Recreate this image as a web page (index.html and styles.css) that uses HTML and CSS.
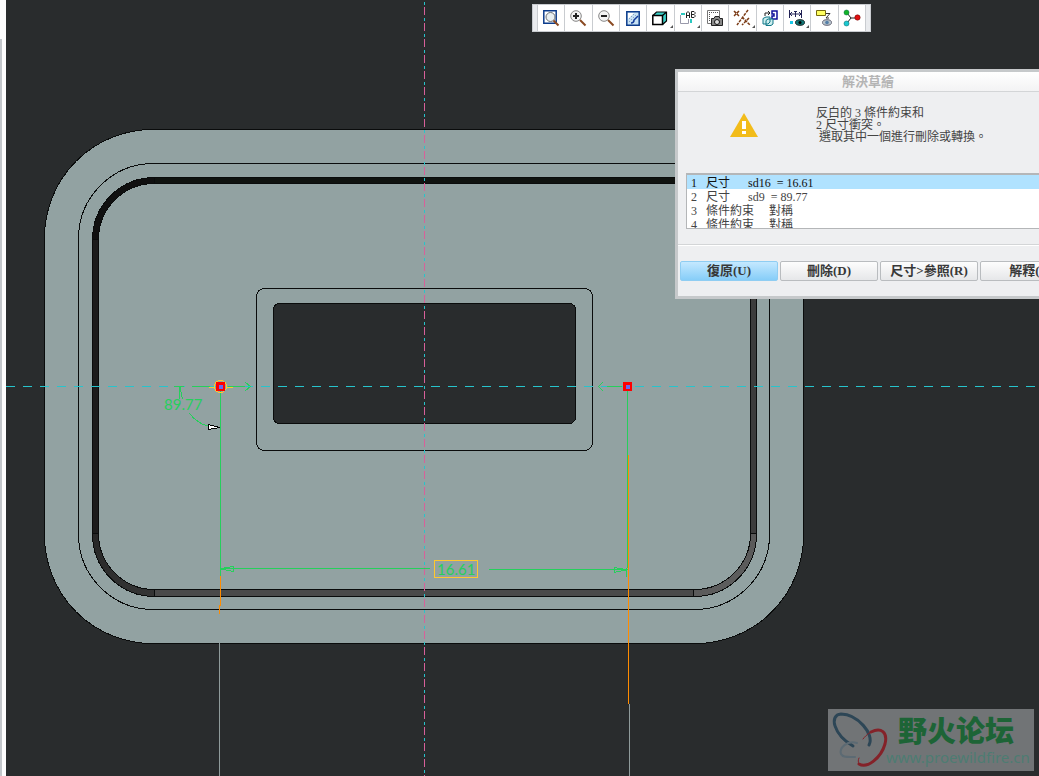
FILE: index.html
```
<!DOCTYPE html>
<html lang="zh-Hant">
<head>
<meta charset="utf-8">
<title>解決草繪</title>
<link rel="stylesheet" href="styles.css">
</head>
<body>
<aside class="edge"></aside>
<main class="viewport">
<svg class="model" shape-rendering="crispEdges">
<defs>
<linearGradient id="groove" x1="0" y1="0" x2="1" y2="1">
<stop offset="0" stop-color="#101010"/>
<stop offset=".25" stop-color="#101010"/>
<stop offset=".5" stop-color="#303030"/>
<stop offset="1" stop-color="#606060"/>
</linearGradient>
</defs>
<!-- plate -->
<g class="outline">
<rect class="plate" x="38.5" y="129.5" width="759" height="514" rx="108"/>
<rect x="72.5" y="163.5" width="691" height="446" rx="75"/>
<rect class="groove" x="86.5" y="177.5" width="664" height="419" rx="62"/>
<path fill="#101310" d="M148 177.500H689V183.500H148z"/>
<path fill="#1c1c1c" d="M86.500 239V533H92.500V239z"/>
<path fill="#4a4a4a" d="M148.500 589.500H687.500V596.500H148.500z"/>
<path fill="#3c3c3c" d="M744.500 239V533H750.500V239z"/>
<rect class="plate" x="92.500" y="183.500" width="652" height="406" rx="56"/>
<rect x="250.500" y="288.500" width="336" height="162" rx="8"/>
<rect class="hole" x="267.500" y="303.500" width="302" height="120" rx="6"/>
</g>
<!-- datum axes -->
<path class="axis-pink" d="M418.500 0V1200"/>
<path class="axis-cyan-v" d="M418.500 0V1200"/>
<line class="axis-cyan" x1="0" y1="386.500" x2="100%" y2="386.500"/>
<!-- angle dimension -->
<g class="dim">
<path d="M168 386.500H178M186 386.500H204M222 386.500H239M239 382L244.500 386.500L239 391"/>
<path d="M173.500 387V399M174 387L176.500 399"/>
<path d="M183 413Q192 424 202 426"/>
<path d="M214.500 390V576"/>
<path d="M601 386.500H616M597 382L592.500 386.500L597 391"/>
<path d="M621.500 391V568"/>
</g>
<path class="arrow" d="M202.500 424.500L214 427.500L202.500 429.500z"/>
<!-- width dimension -->
<g class="dim">
<path d="M215 568.500H424M215 568.500L227 566.500V571.500L215 569"/>
<path d="M483 569.500H622M620 569.500L608 567.500V572.500L620 570M620.500 568V577"/>
</g>
<path class="hot" d="M214.500 576V605.500H213.500V614"/>
<path class="hot" d="M622.500 455V704"/>
<path class="thin" d="M213.500 643V1200M623.500 704V1200"/>
<text class="dim-text" x="158" y="410">89.77</text>
<rect class="dim-box" x="428.500" y="560.500" width="43" height="17"/>
<text class="dim-text" x="431" y="575">16.61</text>
<!-- sketch points -->
<circle class="halo" cx="214.500" cy="386.500" r="6"/>
<path class="halo" d="M203 387.500H209M221 387.500H227"/>
<rect x="210" y="382" width="9" height="9" fill="#f00"/>
<rect x="213" y="385" width="4" height="4" fill="#6a6af0"/>
<rect x="617" y="382" width="9" height="9" fill="#f00"/>
<rect x="620" y="385" width="4" height="4" fill="#6a6af0"/>
</svg>

<nav class="toolbar">
<button type="button" aria-label="重新調整"><svg viewBox="0 0 16 16"><path fill="#fff" stroke="#0c3c8c" stroke-width="1.500" d="M.8 .8H13.200V13.200H.8z"/><circle cx="7.500" cy="7" r="4.500" fill="#e9f0f2" stroke="#6c7074"/><path stroke="#8a4a22" stroke-width="2" d="M10.500 10.500L15.500 15.500"/></svg></button>
<button type="button" aria-label="放大"><svg viewBox="0 0 16 16"><circle cx="6" cy="6" r="5.300" fill="#f4f4f4" stroke="#888"/><path stroke="#222" stroke-width="2" d="M3 6H9M6 3V9"/><path stroke="#8a4a22" stroke-width="2" d="M10 10L15.500 15.500"/></svg></button>
<button type="button" aria-label="縮小"><svg viewBox="0 0 16 16"><circle cx="6" cy="6" r="5.300" fill="#f4f4f4" stroke="#888"/><path stroke="#222" stroke-width="2" d="M3 6H9"/><path stroke="#8a4a22" stroke-width="2" d="M10 10L15.500 15.500"/></svg></button>
<button type="button" aria-label="重畫"><svg viewBox="0 0 16 16"><path fill="#c8e2f4" stroke="#0c3c8c" stroke-width="1.500" d="M1.800 1.800H14.200V15.200H1.800z"/><path fill="#fff" d="M3 3H9L3 9z"/><path stroke="#6a86b0" stroke-dasharray="1 2" d="M4 9L9 4M4 12L11 5"/><path fill="none" stroke="#123c9c" stroke-width="1.500" d="M6 13Q9 13 9 10L13 6"/></svg></button>
<button type="button" class="more" aria-label="顯示樣式"><svg viewBox="0 0 16 16"><path fill="#3bd0c8" d="M1 6L5 2H14V11L11 15V6z"/><path fill="#fff" stroke="#000" stroke-width="1.500" d="M.8 5.500H10.500V14.500H.8z"/><path fill="none" stroke="#000" stroke-width="1.200" d="M1 5.500L4.500 2H14.500V11L10.500 14.500M10.500 5.500L14.500 2"/></svg></button>
<button type="button" class="more" aria-label="已儲存方向"><svg viewBox="0 0 16 16"><path fill="#fff" stroke="#99a" d="M.5 5V13.500H8.500V9"/><path stroke="#2cc8c0" stroke-width="2" d="M1 4H5M11 9V13"/><path fill="none" stroke="#222" d="M6.500 8V3L8 1.500L9.500 3V8M6.500 5.500H9.500M11.500 1.500H14L15 2.500V3.500L14 4.500L15 5.500V6.500L14 7.500H11.500zM12 4.500H14"/></svg></button>
<button type="button" aria-label="視圖管理員"><svg viewBox="0 0 16 16"><path fill="#fff" stroke="#777" d="M.5 .5H12.500V13.500H.5z"/><path stroke="#555" stroke-dasharray="1 1" d="M2 2.500H11M2.500 4V12"/><path fill="#888" stroke="#222" d="M4.500 8.500H7L8 6.500H12L13 8.500H15.500V15.500H4.500z"/><circle cx="10" cy="12" r="2.500" fill="#ddd" stroke="#111"/></svg></button>
<button type="button" class="more" aria-label="基準顯示"><svg viewBox="0 0 16 16"><path stroke="#7a3a14" stroke-width="1.500" stroke-dasharray="3 1" d="M0 1L5 6M5 1L0 6M14 0L3 15M8 7L16 15M15 8L8 15"/></svg></button>
<button type="button" aria-label="草繪視圖"><svg viewBox="0 0 16 16"><path fill="none" stroke="#10109a" stroke-width="1.500" d="M10 1H15V9H10V6H12V4H10z"/><path fill="none" stroke="#222" d="M3 6V3H8M6 1L8 3L6 5"/><path fill="#cdeeee" stroke="#178" d="M1 8.500L4 7H8V12L6 14H1zM4 10.500L6 9H11V14L9 15.500H4z"/></svg></button>
<button type="button" class="more" aria-label="尺寸顯示"><svg viewBox="0 0 16 16"><path fill="none" stroke="#225" d="M.5 0V8M12.500 0V8M1 4H12M3 2L1 4L3 6M10 2L12 4L10 6M5 1.500H8M6.500 1V7"/><path fill="#18c8e8" d="M1 11H4V14H1z"/><ellipse cx="11" cy="12.500" rx="4.500" ry="2.800" fill="#177" stroke="#122"/><circle cx="11" cy="12.500" r="1.500"/></svg></button>
<button type="button" aria-label="約束顯示"><svg viewBox="0 0 16 16"><path fill="#ffff60" stroke="#776a10" d="M.5 .5H9.500V5.500H.5z"/><path fill="none" stroke="#333" d="M10 3.500H14L10 8H13"/><ellipse cx="11" cy="12.500" rx="4.500" ry="2.800" fill="#b8c4cc" stroke="#667"/><circle cx="11" cy="12.500" r="1.800" fill="#557fa8"/></svg></button>
<button type="button" aria-label="頂點顯示"><svg viewBox="0 0 16 16"><path fill="none" stroke="#222" d="M3 3L7 8L3 13M7 8H13"/><circle cx="2.500" cy="2.500" r="2.500" fill="#14b428" stroke="#064" stroke-width=".5"/><circle cx="13.500" cy="7.500" r="2.700" fill="#e01010" stroke="#600" stroke-width=".5"/><circle cx="2.500" cy="13.500" r="2.500" fill="#1cc8d0" stroke="#066" stroke-width=".5"/></svg></button>
</nav>

<section class="dialog" role="dialog" aria-labelledby="title">
<h1 class="title" id="title">解決草繪</h1>
<div class="message">
<svg class="warning" viewBox="0 0 28 24"><path fill="#f2bc1a" d="M14 0L28 24H0z"/><path fill="#fff" d="M12 8H16V16H12zM12 18H16V21H12z"/></svg>
<p>反白的 3 條件約束和<br>2 尺寸衝突。<br>&nbsp;選取其中一個進行刪除或轉換。</p>
</div>
<select class="conflicts" size="4" aria-label="衝突">
<option selected>1&nbsp;&nbsp;&nbsp;尺寸&nbsp;&nbsp;&nbsp;&nbsp;&nbsp;&nbsp;sd16&nbsp;&nbsp;=&nbsp;16.61</option>
<option>2&nbsp;&nbsp;&nbsp;尺寸&nbsp;&nbsp;&nbsp;&nbsp;&nbsp;&nbsp;sd9&nbsp;&nbsp;=&nbsp;89.77</option>
<option>3&nbsp;&nbsp;&nbsp;條件約束&nbsp;&nbsp;&nbsp;&nbsp;&nbsp;對稱</option>
<option>4&nbsp;&nbsp;&nbsp;條件約束&nbsp;&nbsp;&nbsp;&nbsp;&nbsp;對稱</option>
</select>
<footer class="actions">
<button type="button" class="primary">復原(U)</button>
<button type="button">刪除(D)</button>
<button type="button">尺寸&gt;參照(R)</button>
<button type="button">解釋(I)</button>
</footer>
</section>

<div class="watermark">
<svg class="logo" viewBox="0 0 58 56"><g fill="none" stroke-linecap="round"><path stroke="#2d4656" stroke-width="3" d="M38 33C44 22 26 2 10 2C-2 3 2 22 22 34"/><path stroke="#2d4656" stroke-width="1" d="M3 12C6 22 12 30 22 34"/><path stroke="#5c6a73" stroke-width="2" d="M26 31C16 28 8 36 10 42C12 46 18 45 24 45"/><path stroke="#842229" stroke-width="3" d="M40 20C50 15 57 20 54 32C50 46 36 57 28 52"/><path stroke="#842229" stroke-width="1" d="M32 27C36 22 40 19 46 18M28 52C27 50 27 48 28 46"/></g></svg>
<div class="brand">
<strong lang="zh-Hans">野火论坛</strong>
<span>www.proewildfire.cn</span>
</div>
</div>
</main>
</body>
</html>
```
FILE: styles.css
```
body {
  display: flex;
  height: 100vh;
  margin: 0;
  overflow: hidden;
  background: #292c2d;
  font: 12px/12px "Liberation Serif", "Noto Sans CJK TC", serif;
  color: #444;
}
.edge {
  width: 6px;
  background: linear-gradient(#c3c7cb, #c3c7cb) 0 39px / 2px 100% no-repeat #fdfdfd;
}
.viewport {
  position: relative;
  flex: 1;
  overflow: hidden;
}

/* model */
.model {
  display: block;
  width: 100%;
  height: 100%;
}
.outline {
  fill: none;
  stroke: #0a0c0c;
}
.plate {
  fill: #92a2a2;
}
.groove {
  fill: url(#groove);
}
.hole {
  fill: #292c2d;
}
.axis-cyan {
  stroke: #27c4cc;
  stroke-dasharray: 9 8;
}
.axis-pink {
  stroke: #d8609a;
  stroke-dasharray: 8 8;
  stroke-dashoffset: -7px;
}
.axis-cyan-v {
  stroke: #27c4cc;
  stroke-dasharray: 3 13;
  stroke-dashoffset: -2px;
}
.dim {
  fill: none;
  stroke: #26cf5c;
}
.dim-text {
  fill: #26cf5c;
  font: 15px Lato, sans-serif;
}
.dim-box, .halo {
  fill: none;
  stroke: #ffc82e;
}
.arrow {
  fill: #fff;
  stroke: #000;
}
.hot {
  fill: none;
  stroke: #ff8c00;
}
.thin {
  stroke: #8f9b9b;
}

/* toolbar */
.toolbar {
  position: absolute;
  top: 4px;
  left: 526px;
  display: flex;
  box-sizing: border-box;
  width: 339px;
  height: 28px;
  padding: 0 4px;
  border: 1px solid #c9ccd0;
  background: #e9ebee;
}
.toolbar button {
  position: relative;
  display: flex;
  flex: 1;
  align-items: center;
  justify-content: center;
  padding: 0;
  border: 0;
  border-left: 1px solid #c9ccd0;
  background: #fff;
}
.toolbar button:last-child {
  border-right: 1px solid #c9ccd0;
}
.toolbar svg {
  width: 16px;
  height: 16px;
  overflow: visible;
}
.toolbar .more::after {
  content: "";
  position: absolute;
  right: 1px;
  bottom: 3px;
  border-left: 3px solid transparent;
  border-bottom: 3px solid #555;
}

/* dialog */
.dialog {
  position: absolute;
  top: 69px;
  left: 669px;
  box-sizing: border-box;
  width: 408px;
  border: 3px solid #c6c9cb;
  background: #eeeff1;
}
.title {
  margin: 0;
  padding-right: 22px;
  border-bottom: 1px solid #d3d5d7;
  background: linear-gradient(#fff, #f3f3f4);
  color: #b4b4b4;
  font-size: 13px;
  line-height: 19px;
  text-align: center;
}
.message {
  display: flex;
  align-items: center;
  gap: 58px;
  height: 81px;
  padding-left: 52px;
  box-sizing: border-box;
  padding-bottom: 15px;
}
.message p {
  margin: 0;
}
.warning {
  width: 28px;
  height: 24px;
}
.conflicts {
  display: block;
  box-sizing: border-box;
  width: 386px;
  height: 56px;
  margin: 0 8px 15px;
  padding: 0;
  overflow: hidden;
  border: 1px solid #b4b6b8;
  border-top-width: 2px;
  border-radius: 0;
  background: #fff;
  color: #444;
  font: inherit;
}
.conflicts option {
  display: flex;
  align-items: center;
  min-height: 0;
  height: 14px;
  box-sizing: border-box;
  padding: 0 4px 1px;
}
.conflicts option:checked {
  background: #b0e2ff linear-gradient(#b0e2ff, #b0e2ff);
}
.actions {
  display: flex;
  gap: 2px;
  padding: 16px 2px 15px;
  border-top: 1px solid #d3d5d7;
  box-shadow: inset 0 1px #fff;
}
.actions button {
  flex: none;
  width: 98px;
  height: 20px;
  padding: 0;
  border: 1px solid #b9bcbf;
  border-radius: 2px;
  background: linear-gradient(#fdfdfd, #e6e7e9);
  color: #383838;
  font: bold 13px/16px "Liberation Serif", "Noto Sans CJK TC", serif;
}
.actions .primary {
  border-color: #8fcdf2;
  background: linear-gradient(#c4e8ff, #86cdf8);
}

/* watermark */
.watermark {
  position: absolute;
  right: 5px;
  bottom: 5px;
  display: flex;
  box-sizing: border-box;
  width: 206px;
  height: 62px;
  padding: 3px;
  background: #717476;
}
.logo {
  flex: none;
  width: 58px;
  height: 56px;
}
.brand {
  display: flex;
  flex-direction: column;
  margin-left: -3px;
  color: #4d7c72;
  font: 15px/20px "Noto Sans", sans-serif;
}
.brand strong {
  padding-left: 12px;
  color: #1d6436;
  font: 900 29px/35px "Noto Sans CJK SC", sans-serif;
}
```
